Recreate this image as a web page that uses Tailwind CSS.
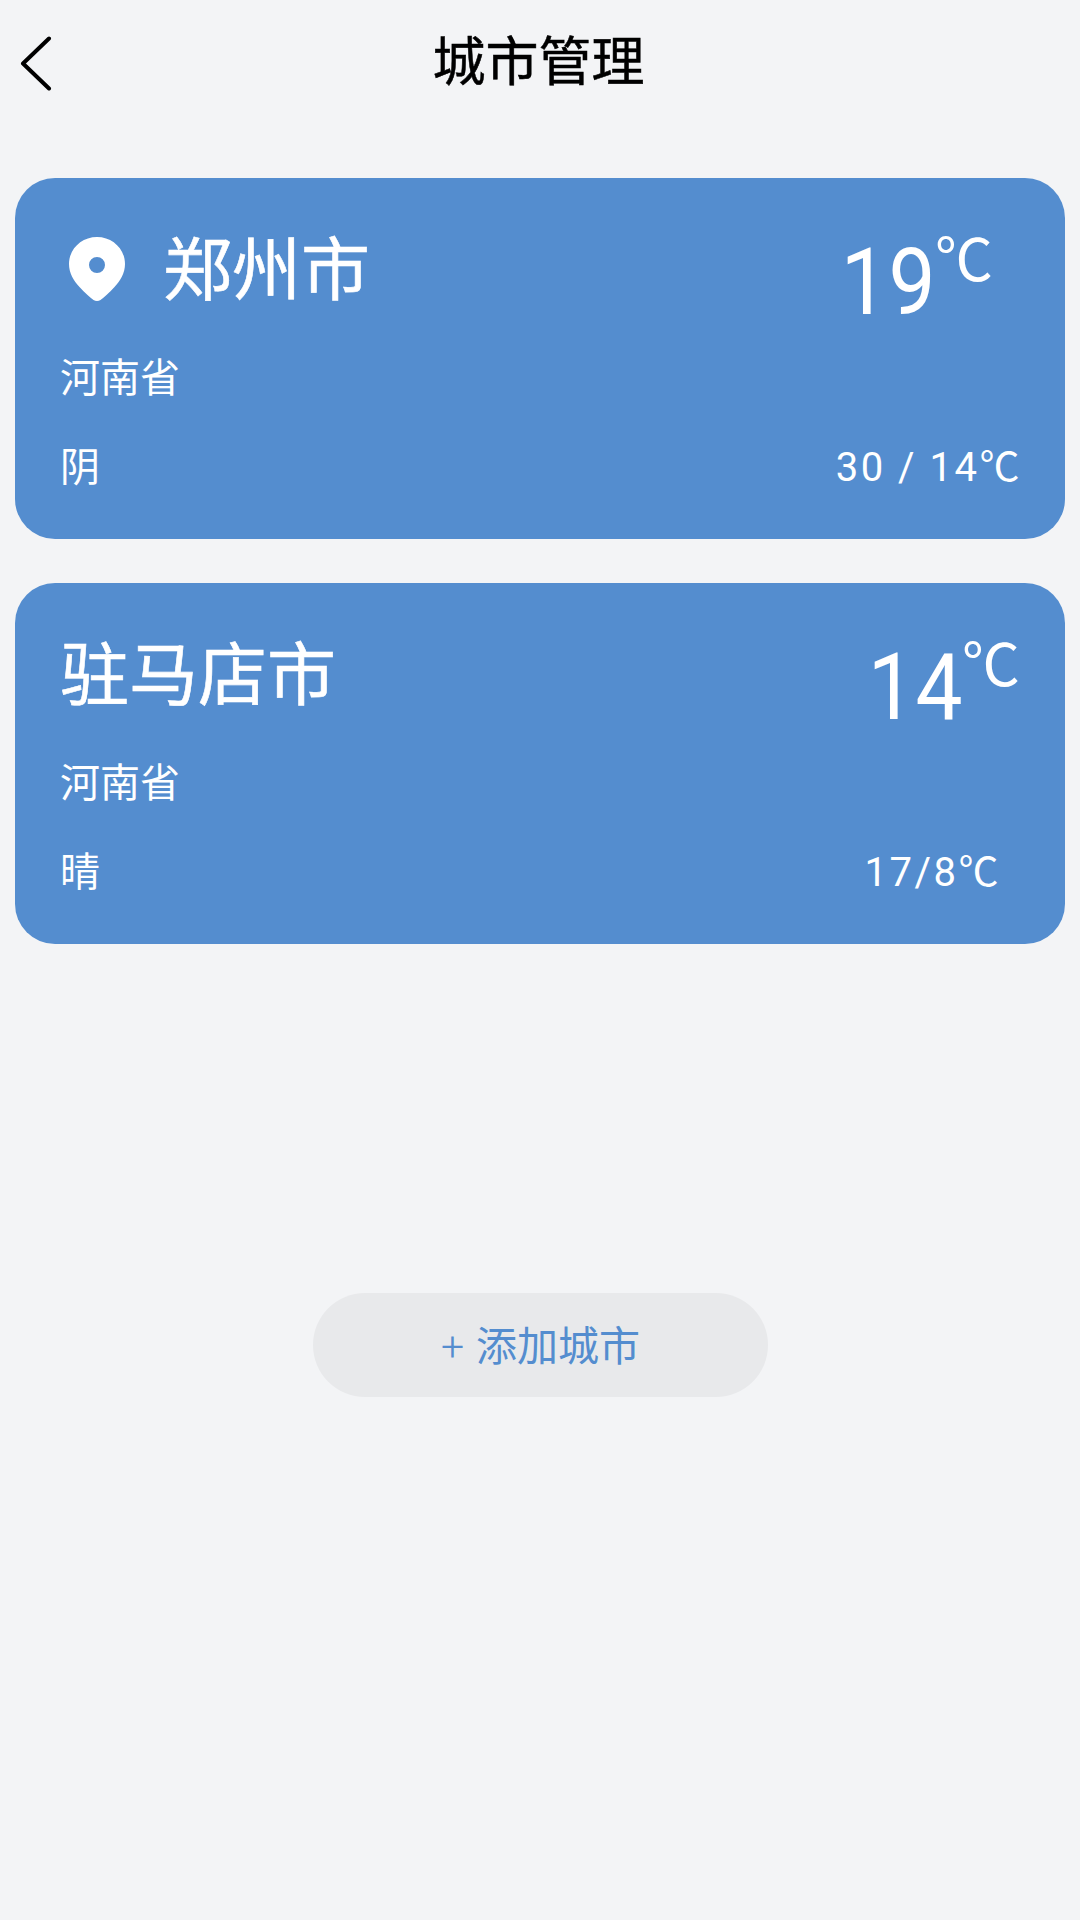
<!DOCTYPE html>
<html lang="zh-CN">
  <head>
    <meta charset="UTF-8" />
    <meta name="viewport" content="width=device-width, initial-scale=1.0" />
    <title>城市管理</title>
    <script src="https://cdn.jsdelivr.net/npm/@tailwindcss/browser@4"></script>
  </head>
  <body class="bg-[#f3f4f6] font-['Roboto','Noto_Sans_CJK_SC',sans-serif]">
    <div class="w-[1080px] h-[1920px] flex flex-col overflow-hidden">
      <!-- Header -->
      <header class="relative h-[120px] flex items-center justify-center shrink-0">
        <button class="absolute left-[20px] top-[36px]">
          <svg width="34" height="56" viewBox="0 0 34 56" fill="none">
            <path d="M29 2.500 L3 27.500 L29 52.500" stroke="#000" stroke-width="4" stroke-linecap="round" stroke-linejoin="round" />
          </svg>
        </button>
        <h1 class="text-[53px] leading-none text-black font-normal [-webkit-text-stroke:0.5px_#000] pt-[6px] mr-[3px]">城市管理</h1>
      </header>

      <!-- City cards -->
      <main class="mt-[58px] px-[15px] flex flex-col gap-[44px]">
        <div class="h-[361px] w-[1050px] rounded-[40px] bg-[#548dcf] text-white pl-[45px] pr-[45px] pt-[48px] flex flex-col">
          <div class="flex justify-between items-start h-[127px]">
            <div class="flex items-center gap-[37px] pl-[8px] pt-[8px]">
              <svg class="-mt-[7px]" width="58" height="66" viewBox="0 0 58 66">
                <path fill="#fff" fill-rule="evenodd" d="M29 1C13.500 1 1 13 1 28c0 9 4.500 16.500 10.500 23C17 57 22 61.500 25.500 64c2 1.400 5 1.400 7 0C36 61.500 41 57 46.500 51 52.500 44.500 57 37 57 28 57 13 44.500 1 29 1Zm0 20a8 8 0 1 1 0 16 8 8 0 0 1 0-16Z" />
              </svg>
              <span class="text-[69px] leading-[76px] [-webkit-text-stroke:0.6px_#fff]">郑州市</span>
            </div>
            <div class="flex items-start mr-[27px] mt-[2px]">
              <span class="text-[93px] leading-[110px] tracking-[1px] scale-x-90 origin-right">19</span>
              <span class="text-[58px] leading-[58px] mt-[4px] -ml-[2px]">℃</span>
            </div>
          </div>
          <div class="text-[40px] leading-[48px] mt-[2px]">河南省</div>
          <div class="flex justify-between items-center mt-[41px] text-[40px] leading-[48px]">
            <span>阴</span>
            <span class="-mr-[2px] tracking-[2.500px]">30 / 14℃</span>
          </div>
        </div>

        <div class="h-[361px] w-[1050px] rounded-[40px] bg-[#548dcf] text-white pl-[45px] pr-[45px] pt-[48px] flex flex-col">
          <div class="flex justify-between items-start h-[127px]">
            <span class="text-[69px] leading-[76px] [-webkit-text-stroke:0.6px_#fff] pt-[8px]">驻马店市</span>
            <div class="flex items-start mt-[2px]">
              <span class="text-[93px] leading-[110px] tracking-[1px] scale-x-90 origin-right">14</span>
              <span class="text-[58px] leading-[58px] mt-[4px] -ml-[2px]">℃</span>
            </div>
          </div>
          <div class="text-[40px] leading-[48px] mt-[2px]">河南省</div>
          <div class="flex justify-between items-center mt-[41px] text-[40px] leading-[48px]">
            <span>晴</span>
            <span class="mr-[19px] tracking-[2.500px]">17/8℃</span>
          </div>
        </div>
      </main>

      <!-- Add city -->
      <button class="mt-[349px] ml-[313px] w-[455px] h-[104px] rounded-full bg-[#e8e9eb] text-[#548dcf] text-[41px] leading-none flex items-center justify-center gap-[12px] pt-[4px]">
        <span class="font-light">+</span>
        <span>添加城市</span>
      </button>
    </div>
  </body>
</html>
